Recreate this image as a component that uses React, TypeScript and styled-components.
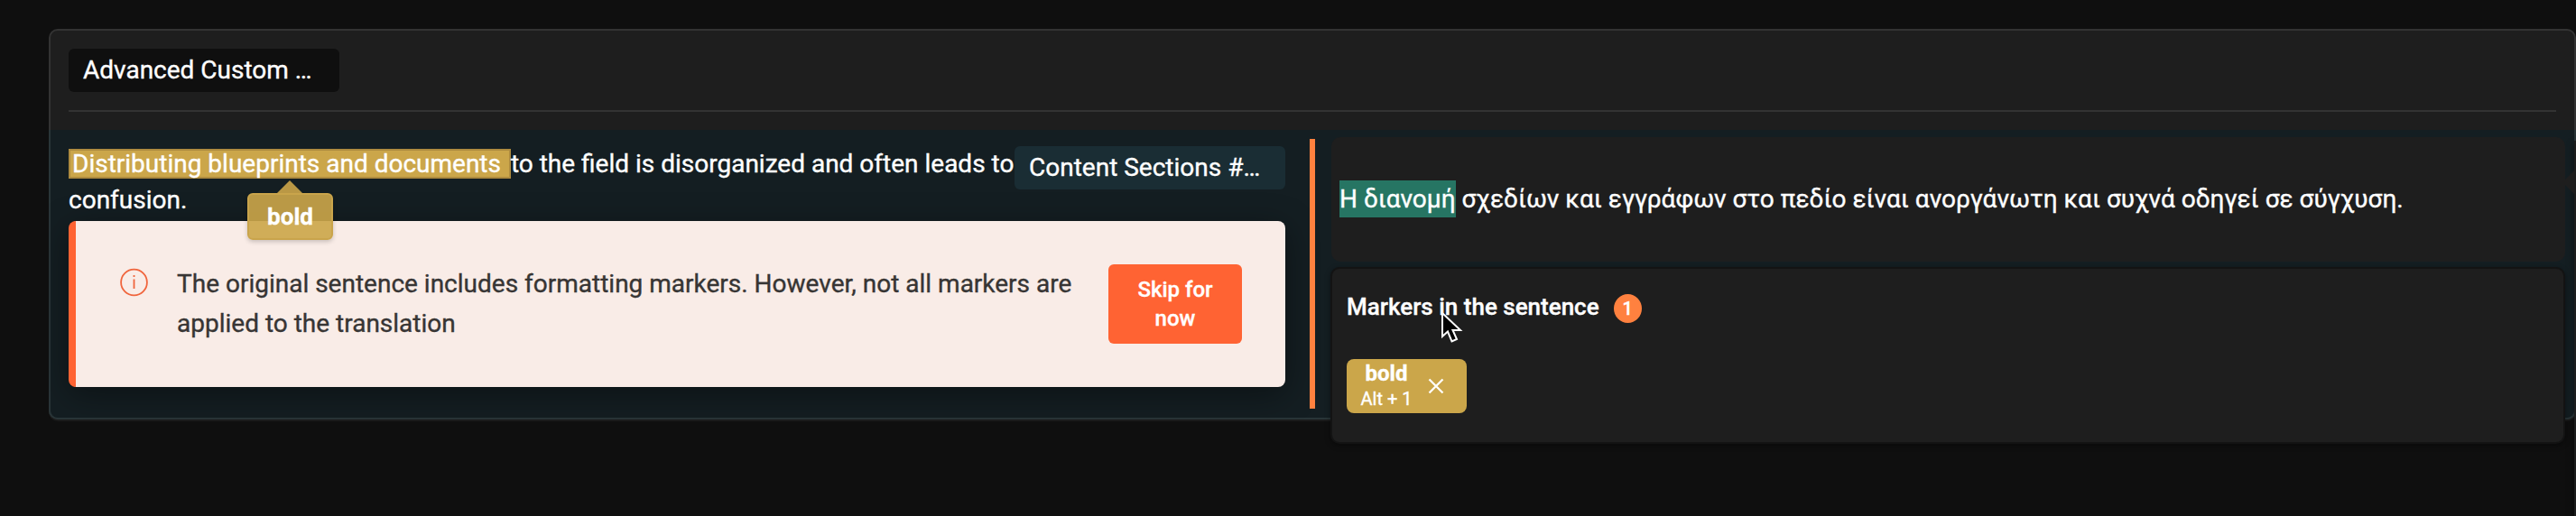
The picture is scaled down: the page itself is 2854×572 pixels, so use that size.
import React from "react";
import styled, { createGlobalStyle } from "styled-components";

const GlobalStyle = createGlobalStyle`
  *, *::before, *::after { box-sizing: border-box; }
  body {
    margin: 0;
    background: #0f0f0f;
    font-family: Roboto, "Liberation Sans", sans-serif;
    color: #fff;
    overflow: hidden;
    -webkit-text-stroke: 0.35px currentColor;
  }
`;

const Page = styled.main`
  position: relative;
  height: 572px;
  padding: 32px 0 0 54px;
  overflow: hidden;
`;

const Card = styled.section`
  height: 433px;
  border: 2px solid #333;
  border-radius: 10px;
  background: #1e1e1e;
  box-shadow: 0 2px 0 #1a1b1b;
  display: flex;
  flex-direction: column;
`;

const CardHeader = styled.header`
  height: 90px;
  margin: 0 20px;
  padding-top: 20px;
  border-bottom: 2px solid #333;
`;

const Tag = styled.div<{ $tone: "dark" | "teal" }>`
  flex: none;
  width: 300px;
  height: 48px;
  padding: 0 16px;
  border-radius: 6px;
  background: ${(p) => (p.$tone === "dark" ? "#0f0f0f" : "#1a2d34")};
  font-size: 28px;
  line-height: 47px;
  white-space: nowrap;
`;

const Row = styled.div`
  flex: 1;
  margin-top: 20px;
  display: flex;
  background: #141e22;
  border-radius: 0 0 8px 8px;
  box-shadow: 0 0 0 2px #293538;
  clip-path: inset(0 -2px -2px);
`;

const Source = styled.div`
  width: 1368px;
  padding: 18px 0 0 20px;
`;

const SourceLine = styled.div`
  height: 83px;
  display: flex;
`;

const Sentence = styled.p`
  margin: 0;
  width: 1048px;
  font-size: 28px;
  line-height: 40px;
  white-space: nowrap;
`;

const Marked = styled.mark`
  display: inline-block;
  height: 33px;
  padding: 0 2px;
  border: 2px solid #ae8b3f;
  background: #cba64a;
  color: #fff;
  line-height: 29px;
  white-space: pre;
`;

const Tooltip = styled.div`
  position: absolute;
  left: 274px;
  top: 214px;
  width: 95px;
  height: 52px;
  border: 2px solid #c9a44b;
  border-radius: 6px;
  background: rgba(203, 166, 74, 0.91);
  box-shadow: 0 2px 5px rgba(0, 0, 0, 0.2);
  font-size: 26px;
  font-weight: 700;
  line-height: 49px;
  text-align: center;
  &::before {
    content: "";
    position: absolute;
    left: 31px;
    top: -16px;
    border: 14px solid transparent;
    border-top: 0;
    border-bottom-color: #ba9845;
  }
`;

const Alert = styled.div`
  height: 184px;
  display: flex;
  padding: 0 48px 0 49px;
  border-left: 8px solid #ff6333;
  border-radius: 8px;
  background: #f9ece7;
  color: #373534;
  box-shadow: 0 8px 36px rgba(0, 0, 0, 0.4);
`;

const InfoIcon = styled.svg`
  flex: none;
  width: 32px;
  height: 32px;
  margin-top: 52px;
`;

const AlertText = styled.p`
  width: 1000px;
  margin: 48px 0 0 31px;
  font-size: 28px;
  line-height: 44px;
  white-space: nowrap;
`;

const SkipButton = styled.button`
  width: 148px;
  height: 88px;
  margin: 48px 0 0 auto;
  padding: 0 24px;
  border: 0;
  border-radius: 6px;
  background: #ff6333;
  color: #fff;
  font: 500 24px/32px Roboto, sans-serif;
`;

const Divider = styled.div`
  width: 6px;
  height: 299px;
  margin: 10px 0 0 27px;
  background: #ff813f;
`;

const Target = styled.div`
  width: 1367px;
  height: 138px;
  margin: 8px 0 0 18px;
  padding: 48px 9px;
  border-radius: 10px;
  background: #1e1e1e;
  font-size: 28px;
  line-height: 41px;
  white-space: nowrap;
`;

const Selection = styled.span`
  display: inline-block;
  background: #267563;
`;

const Markers = styled.section`
  position: absolute;
  left: 1474px;
  top: 296px;
  width: 1368px;
  height: 196px;
  padding: 24px 16px;
  border: 2px solid #131313;
  border-radius: 10px;
  background: #1e1e1e;
  box-shadow: 0 2px 6px rgba(0, 0, 0, 0.4);
`;

const MarkersTitle = styled.h2`
  display: flex;
  align-items: center;
  gap: 16px;
  height: 36px;
  margin: 0;
  font-size: 26px;
  font-weight: 500;
`;

const Count = styled.span`
  width: 31px;
  height: 32px;
  margin-top: 4px;
  border-radius: 50%;
  background: #ff813f;
  font-size: 20px;
  line-height: 32px;
  text-align: center;
`;

const MarkerChip = styled.div`
  display: flex;
  width: 133px;
  height: 60px;
  margin-top: 40px;
  padding-left: 16px;
  border-radius: 8px;
  background: #cba64a;
`;

const ChipLabel = styled.div`
  width: 56px;
  padding-top: 2px;
  display: flex;
  flex-direction: column;
  align-items: center;
  font-size: 20px;
  line-height: 28px;
  white-space: nowrap;
  strong { font-size: 24px; line-height: 28px; height: 28px; }
`;

const CloseIcon = styled.svg`
  width: 18px;
  height: 18px;
  margin: 21px 0 0 18px;
`;

const Cursor = styled.svg`
  position: absolute;
  left: 1595px;
  top: 344px;
  width: 26px;
  height: 38px;
`;

const SidePanelEdge = styled.aside`
  position: absolute;
  left: 2852px;
  top: 156px;
  width: 10px;
  height: 430px;
  background: #1c1d1d;
  box-shadow: 0 4px 10px rgba(0, 0, 0, 0.4);
  &::before {
    content: "";
    position: absolute;
    left: -13px;
    top: 32px;
    border: 14px solid transparent;
    border-left: 0;
    border-right: 14px solid #1e1e1e;
  }
`;

export default function App() {
  return (
    <Page>
      <GlobalStyle />
      <Card>
        <CardHeader>
          <Tag $tone="dark">Advanced Custom …</Tag>
        </CardHeader>
        <Row>
          <Source>
            <SourceLine>
              <Sentence>
                <Marked>{"Distributing blueprints and documents "}</Marked>to the field is disorganized and often leads to
                <br />
                confusion.
              </Sentence>
              <Tag $tone="teal">Content Sections #…</Tag>
            </SourceLine>
            <Alert>
              <InfoIcon viewBox="0 0 32 32" fill="none" stroke="#f0653d" strokeWidth="1.8">
                <circle cx="15.5" cy="16" r="14.4" />
                <path d="M15.5 12.5v10.5M15.5 8v2" />
              </InfoIcon>
              <AlertText>
                The original sentence includes formatting markers. However, not all markers are
                <br />
                applied to the translation
              </AlertText>
              <SkipButton>Skip for now</SkipButton>
            </Alert>
          </Source>
          <Divider />
          <Target>
            <Selection>Η διανομή</Selection> σχεδίων και εγγράφων στο πεδίο είναι ανοργάνωτη και συχνά οδηγεί σε σύγχυση.
          </Target>
        </Row>
      </Card>
      <Tooltip>bold</Tooltip>
      <SidePanelEdge />
      <Markers>
        <MarkersTitle>
          Markers in the sentence <Count>1</Count>
        </MarkersTitle>
        <MarkerChip>
          <ChipLabel>
            <strong>bold</strong>
            Alt + 1
          </ChipLabel>
          <CloseIcon viewBox="0 0 18 18" stroke="#fff" strokeWidth="2.3">
            <path d="M1.5 1.5l15 15M16.5 1.5l-15 15" />
          </CloseIcon>
        </MarkerChip>
      </Markers>
      <Cursor viewBox="0 0 26 38" fill="#000" stroke="#fff" strokeWidth="2">
        <path d="M3 3v26l6-5.5 4.5 11 5.5-2.5-4.5-10H23z" />
      </Cursor>
    </Page>
  );
}
